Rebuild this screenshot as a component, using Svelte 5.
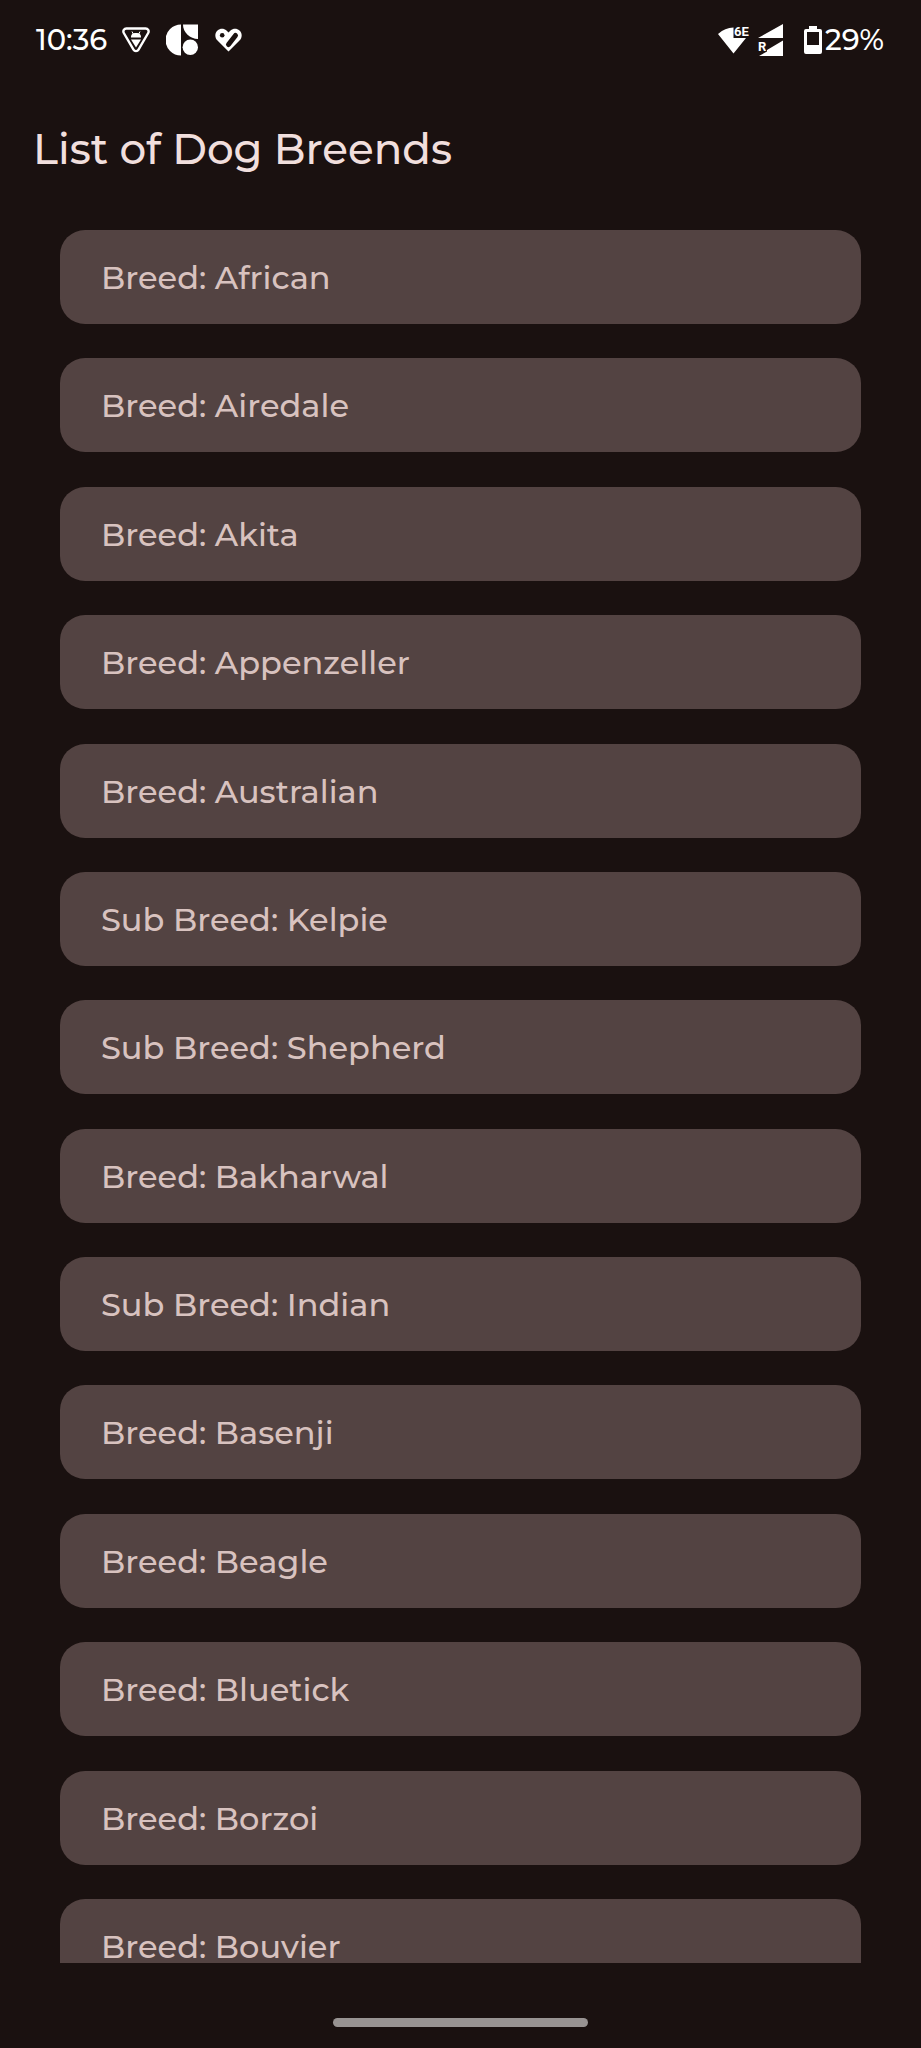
<script>
  const items = [
    ['Breed', 'African'],
    ['Breed', 'Airedale'],
    ['Breed', 'Akita'],
    ['Breed', 'Appenzeller'],
    ['Breed', 'Australian'],
    ['Sub Breed', 'Kelpie'],
    ['Sub Breed', 'Shepherd'],
    ['Breed', 'Bakharwal'],
    ['Sub Breed', 'Indian'],
    ['Breed', 'Basenji'],
    ['Breed', 'Beagle'],
    ['Breed', 'Bluetick'],
    ['Breed', 'Borzoi'],
    ['Breed', 'Bouvier']
  ];
</script>

<div class="screen">
  <div class="status">
    <div class="group">
      <span class="time">10:36</span>
      <svg class="shield" width="28" height="26" viewBox="0 0 28 26" aria-hidden="true">
        <path d="M4.5 1.5h19a3 3 0 0 1 2.700 4.500L16.500 22.700a2.900 2.900 0 0 1-5 0L1.800 6A3 3 0 0 1 4.500 1.500z" fill="none" stroke="#fff" stroke-width="2.400" />
        <path d="M9 10.500V9.500a4 4 0 0 1 4-3.500h2a4 4 0 0 1 4 3.500v1z M9 12.400h10l-5 8z" fill="#fff" />
        <path d="M10 4.500l1.500 3M18 4.500l-1.500 3" stroke="#fff" stroke-width="1" />
      </svg>
      <svg class="shapes" width="32" height="32" viewBox="0 0 32 32" fill="#fff" aria-hidden="true">
        <path d="M15 0.500v31A15.500 15.500 0 0 1 15 0.500z" />
        <path d="M17 0.500h15v14.500C24 15 17 8.500 17 0.500z" />
        <circle cx="24.300" cy="23.300" r="7.700" />
      </svg>
      <svg class="heart" width="28" height="24" viewBox="0 0 28 24" aria-hidden="true">
        <path d="M13.500 23.500L2.500 12.500C-0.500 9.500-0.300 5 2.500 2.500C5.200 0 9 0.200 11.500 2.600L13.500 4.600L15.500 2.600C18 0.200 21.800 0 24.500 2.500C27.300 5 27.500 9.500 24.500 12.500z" fill="#fff" />
        <circle cx="7.200" cy="7.200" r="2.300" fill="#1a1110" />
        <path d="M13.500 16.500L20.500 7.500" stroke="#1a1110" stroke-width="5" stroke-linecap="round" />
        <path d="M9.500 13L17 5" stroke="#fff" stroke-width="2.600" />
      </svg>
    </div>
    <div class="group">
      <svg class="wifi" width="32" height="30" viewBox="0 0 32 30" aria-hidden="true">
        <path d="M0 9Q7 2.500 15.500 2.500V13H28L15.500 28.500z" fill="#fff" />
        <text x="16" y="11" font-size="13" font-weight="700" fill="#fff">6E</text>
      </svg>
      <svg class="signal" width="26" height="32" viewBox="0 0 26 32" aria-hidden="true">
        <path d="M25 0V14H0z M25 16.500V32H1L9 27.500V26z" fill="#fff" />
        <text x="0" y="27" font-size="13" font-weight="700" fill="#fff">R</text>
      </svg>
      <svg class="battery" width="18" height="28" viewBox="0 0 18 28" aria-hidden="true">
        <path fill="#fff" fill-rule="evenodd" d="M5 0h8v3h3a2 2 0 0 1 2 2v21a2 2 0 0 1-2 2H2a2 2 0 0 1-2-2V5a2 2 0 0 1 2-2h3z M3 6v13h12V6z" />
      </svg>
      <span class="level">29%</span>
    </div>
  </div>

  <h1>List of Dog Breends</h1>

  <main>
    <ul>
      {#each items as [kind, name]}
        <li>{kind}: {name}</li>
      {/each}
    </ul>
  </main>

  <div class="nav"><span class="handle"></span></div>
</div>

<style>
  :global(body) {
    background: #1a1110;
  }

  .screen {
    box-sizing: border-box;
    display: flex;
    flex-direction: column;
    height: 100vh;
    background: #1a1110;
    color: #f1dfdd;
    font-family: Montserrat, Inter, sans-serif;
    font-weight: 500;
  }

  .status {
    display: flex;
    justify-content: space-between;
    align-items: center;
    height: 80px;
    padding: 0 37px 0 36px;
    color: #fff;
    font-family: Montserrat, Lato, sans-serif;
    font-size: 29px;
    line-height: 32px;
  }

  .group {
    display: flex;
    align-items: center;
  }

  .status text {
    font-family: Roboto, sans-serif;
  }

  .shield {
    margin-left: 15px;
  }

  .shapes {
    margin-left: 16px;
  }

  .heart {
    margin-left: 17px;
  }

  .signal {
    margin-left: 8px;
  }

  .battery {
    margin-left: 20px;
    margin-right: 3px;
  }

  h1 {
    margin: 0;
    height: 150px;
    padding: 39px 33px 0;
    box-sizing: border-box;
    font-size: 42px;
    line-height: 60px;
    font-weight: 500;
  }

  main {
    flex: 1;
    min-height: 0;
    padding: 0 60px;
    overflow: hidden;
  }

  ul {
    display: flex;
    flex-direction: column;
    justify-content: space-between;
    box-sizing: border-box;
    height: calc(100% + 30px);
    margin: 0;
    padding: 0;
    list-style: none;
  }

  li {
    flex: none;
    padding: 27px 41px 25px;
    border-radius: 25px;
    background: #534342;
    color: #d8c2bf;
    font-size: 32px;
    line-height: 42px;
  }

  .nav {
    display: flex;
    justify-content: center;
    align-items: center;
    height: 85px;
    padding-top: 34px;
    box-sizing: border-box;
  }

  .handle {
    width: 255px;
    height: 9px;
    border-radius: 5px;
    background: #989392;
  }
</style>
